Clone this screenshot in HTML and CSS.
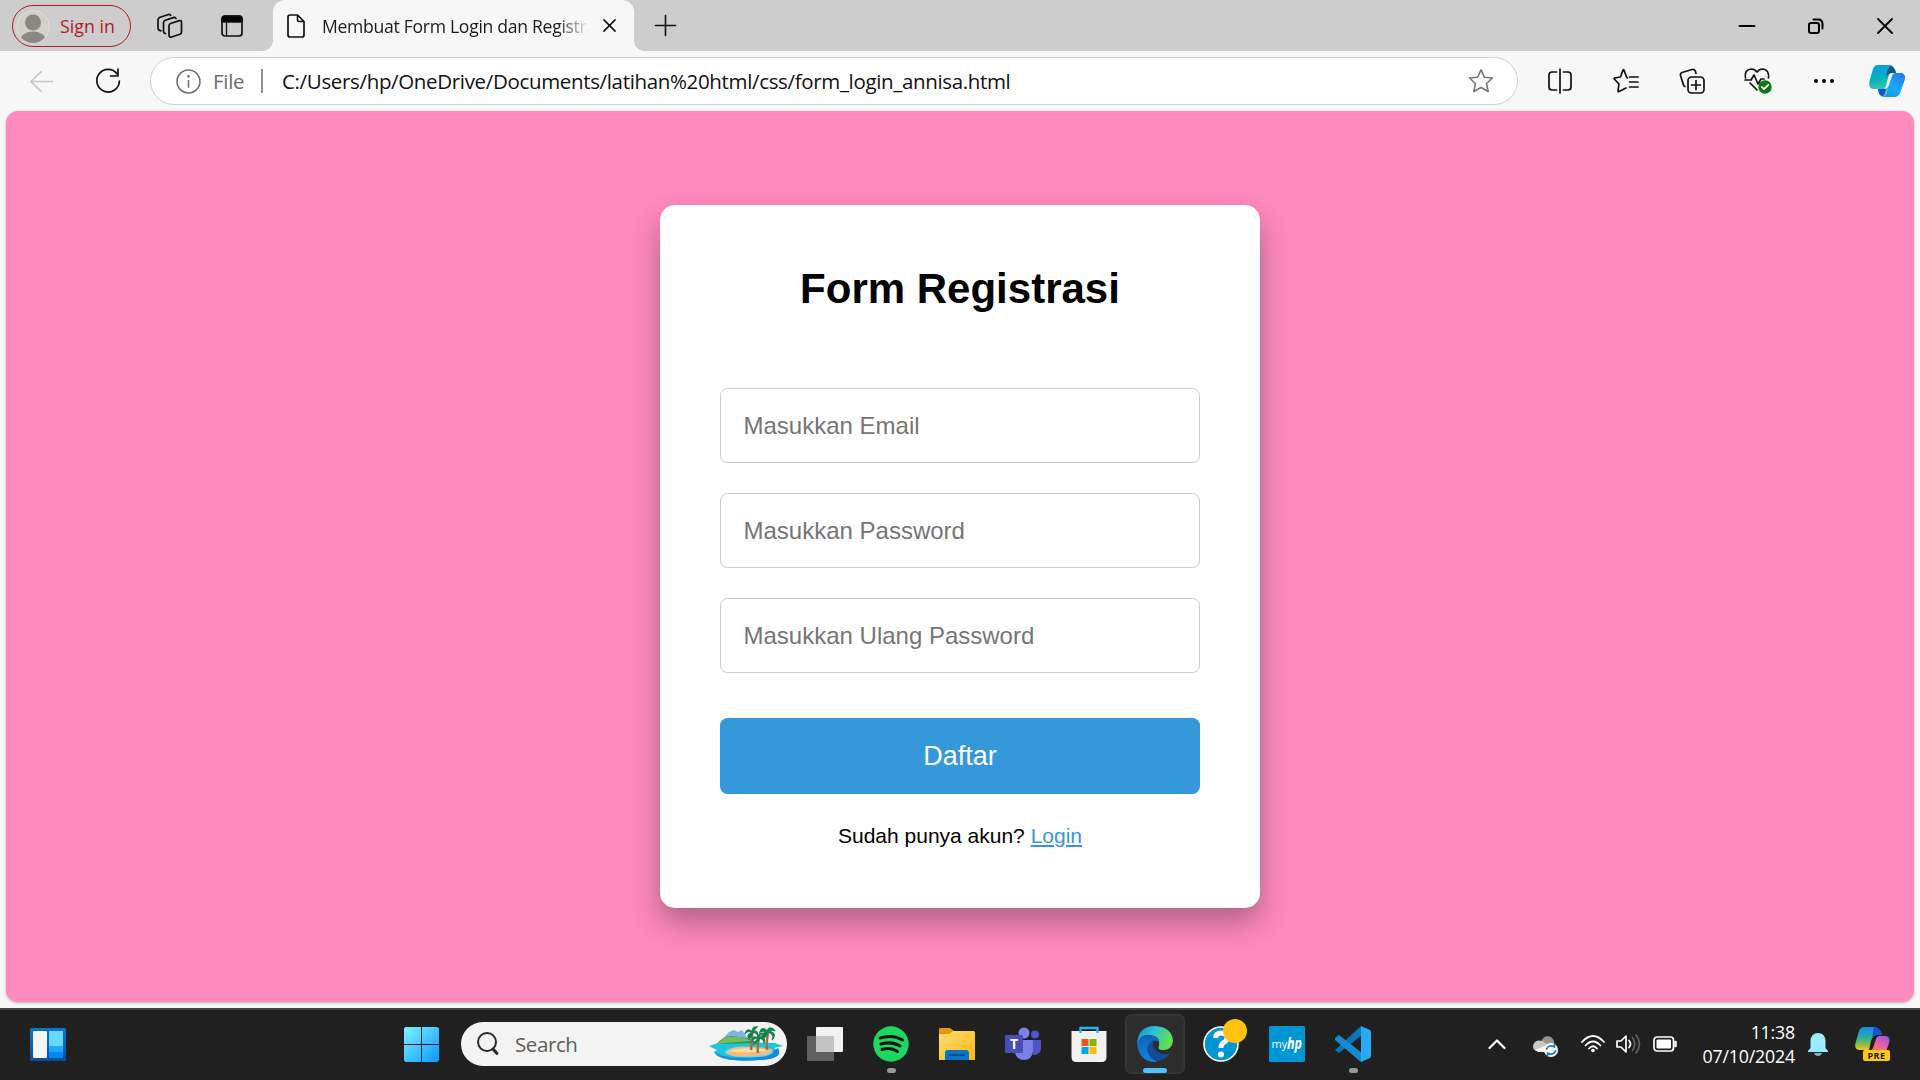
FILE: index.html
```html
<!DOCTYPE html>
<html lang="id">
<head>
<meta charset="utf-8">
<title>Membuat Form Login dan Registrasi</title>
<link rel="stylesheet" href="styles.css">
</head>
<body>
<div class="screen">
  <header class="tabbar">
    <div class="signin">
      <svg class="avatar" viewBox="0 0 34 34"><defs><clipPath id="av"><circle cx="17" cy="17" r="16"/></clipPath></defs><circle cx="17" cy="17" r="16.2" fill="#d3d0cc" stroke="#e3e0dc"/><circle cx="17" cy="12.5" r="8" fill="#8b8784"/><ellipse cx="17" cy="30" rx="12.5" ry="8.5" fill="#8b8784" clip-path="url(#av)"/></svg>
      <span class="signin-text">Sign in</span>
    </div>
    <svg class="workspaces ink" viewBox="0 0 26 26"><path d="M13.500 10.500L22.500 7.600Q24.500 7.200 24.500 9V19Q24.500 20.700 23 21.200L14.500 24Q12 24.500 12 22V13Q12 11 13.500 10.500Z"/><path d="M8.500 20.500H8Q6.500 20 6.500 18.500V10Q6.500 8 8.300 7.300L17 4.400Q18.500 4 19 5.500M4 17.800Q1 17.500 1 15V7Q1 5 3 4.300L11.500 1.500Q13 1 13.700 2.300"/></svg>
    <svg class="tabactions ink" viewBox="0 0 22 22"><rect x="1" y="1" width="20" height="20" rx="3"/><path d="M1 7V4Q1 1 4 1H18Q21 1 21 4V7Z" fill="#000"/><path d="M5.500 7V21" stroke-width="1.300"/></svg>
    <div class="tab">
      <svg class="file ink" viewBox="0 0 18 24"><path d="M3 1H10.500L17 7.500V21Q17 23 15 23H3Q1 23 1 21V3Q1 1 3 1ZM10.500 1V6Q10.500 7.500 12 7.500H17"/></svg>
      <span class="tab-title">Membuat Form Login dan Registrasi</span>
      <svg class="tab-close ink" viewBox="0 0 14 14"><path d="M1 1L13 13M13 1L1 13"/></svg>
    </div>
    <svg class="newtab ink" viewBox="0 0 22 22"><path d="M11 .5V21.500M.5 11H21.500"/></svg>
    <div class="window-buttons">
      <svg class="wb ink" viewBox="0 0 16 16"><path d="M.5 8H15.500" stroke-width="2"/></svg>
      <svg class="wb ink" viewBox="0 0 16 16"><rect x="1" y="5" width="10" height="10" rx="2" stroke-width="2"/><path d="M5.500 1.500H10Q14.500 1.500 14.500 6V10.500" stroke-width="2"/></svg>
      <svg class="wb ink" viewBox="0 0 16 16"><path d="M1 1L15 15M15 1L1 15" stroke-width="1.900"/></svg>
    </div>
  </header>

  <nav class="toolbar">
    <svg class="nav back" viewBox="0 0 26 24"><path d="M25 12H2M13 1.500L2 12L13 22.500"/></svg>
    <svg class="nav refresh ink" viewBox="0 0 26 26"><path d="M22.200 6A11.300 11.300 0 1 0 24.400 13M23 1V8H15.500"/></svg>
    <div class="address">
      <svg class="info" viewBox="0 0 24 24"><circle cx="12" cy="12" r="11"/><path d="M12 10.500V18"/><circle cx="12" cy="7" r=".6"/></svg>
      <span class="scheme">File</span>
      <span class="divider"></span>
      <span class="url">C:/Users/hp/OneDrive/Documents/latihan%20html/css/form_login_annisa.html</span>
      <svg class="star" viewBox="0 0 26 26"><path d="M13 1.800L16.300 9.200L24.500 10L18.500 15.500L20.200 23.500L13 19.500L5.800 23.500L7.500 15.500L1.500 10L9.700 9.200Z"/></svg>
    </div>
    <div class="tools">
      <div class="tool"><svg class="ink i26" viewBox="0 0 26 26"><path d="M9.500 4H5Q2 4 2 7V19Q2 22 5 22H9.500M16.500 4H21Q24 4 24 7V19Q24 22 21 22H16.500M13 1V25"/></svg></div>
      <div class="tool"><svg class="ink i26" viewBox="0 0 26 26"><path d="M14.500 10L13.500 9L11 2Q10.500 1.500 10 2L7.500 9L1.500 10Q.8 10.500 1.300 11L6 16L5 23Q5.200 24 6 23.500L13 20M16.500 9H25M16.500 14H25M16.500 19H25"/></svg></div>
      <div class="tool"><svg class="ink i26" viewBox="0 0 26 26"><rect x="9" y="9" width="16" height="16" rx="3.500"/><path d="M17 12.500V21.500M12.500 17H21.500M6 18.500Q4.800 18 4.500 17L1.500 7.500Q1 5.500 3 4.500L13 1.500Q15.500 1 16.300 3L17 5.500"/></svg></div>
      <div class="tool"><svg class="ink i28" viewBox="0 0 28 28"><path d="M1.500 11Q0 3 7 2Q11 2 13 5Q15 2 19 2Q25.500 3 24.500 11M1 13H7L10 8L14 17L17 12H20M6 16L13 23"/><circle cx="21" cy="20" r="6.700" fill="#107610" stroke="none"/><path d="M17.800 20L20 22.200L24.300 17.800" stroke="#fff"/></svg></div>
      <div class="tool"><svg class="i22" viewBox="0 0 22 22"><circle cx="3" cy="11" r="2"/><circle cx="11" cy="11" r="2"/><circle cx="19" cy="11" r="2"/></svg></div>
      <div class="tool tool-last"><svg class="i36" viewBox="0 0 36 34"><defs><linearGradient id="c1" x2=".2" y2="1"><stop stop-color="#0799e4"/><stop offset=".5" stop-color="#0ab2bd"/><stop offset="1" stop-color="#58dc88"/></linearGradient><linearGradient id="c2" x1="1" x2=".4" y2="1"><stop stop-color="#2870df"/><stop offset=".6" stop-color="#19a8ff"/><stop offset="1" stop-color="#159bee"/></linearGradient></defs><path d="M20 1Q25 1 27 9H33Q37 11 35.500 16L31 29Q29 33 25 33H14Q10 33 9 25H4Q-1 24 .5 17L4 5Q5.500 1 9 1Z" fill="url(#c1)"/><path d="M19 1Q25 1 27 9H22Q19 9 17.500 13Q18 4 22 1.500Z" fill="#075784"/><path d="M27 9H33Q37 11 35.500 16L31 29Q29 33 25 33H14Q17 32 18.500 27L23 12Q24 9 27 9Z" fill="url(#c2)"/><path d="M9 25H14Q17 25 18 22L16 29Q15 33 13 32Q10 31 9 25Z" fill="#1c4ce0"/><path d="M22 9H26Q24 9 23 12L19.500 22Q18.500 25 15 25Q16.500 24 17 22L19.500 12Q20 10 22 9Z" fill="#f7f7f7"/></svg></div>
    </div>
  </nav>

  <main class="viewport">
    <form class="card">
      <h2 class="card-title">Form Registrasi</h2>
      <input class="field" type="email" placeholder="Masukkan Email">
      <input class="field" type="password" placeholder="Masukkan Password">
      <input class="field" type="password" placeholder="Masukkan Ulang Password">
      <button class="submit" type="button">Daftar</button>
      <p class="switch">Sudah punya akun? <a class="link" href="#">Login</a></p>
    </form>
  </main>

  <footer class="taskbar">
    <svg class="widgets" viewBox="0 0 36 33"><defs><linearGradient id="w" x2="0" y2="1"><stop stop-color="#0878d4"/><stop offset="1" stop-color="#0c4c94"/></linearGradient></defs><rect width="36" height="33" rx="1.500" fill="url(#w)"/><rect x="3" y="3" width="14" height="27" rx="1" fill="#f5f5f7"/><path d="M19 3H33V18H19Z" fill="#67d9ff"/><path d="M19 18H33V24H19Z" fill="#1da5ff"/><path d="M19 24H33V30H19Z" fill="#0487f2"/></svg>
    <svg class="start" viewBox="0 0 35 35"><defs><linearGradient id="s" gradientUnits="userSpaceOnUse" x2="35" y2="35"><stop stop-color="#7df3ff"/><stop offset="1" stop-color="#0a96ff"/></linearGradient></defs><path d="M1.500 0H17V17H0V1.500ZM18 0H33.500L35 1.500V17H18ZM0 18H17V35H1.500L0 33.500ZM18 18H35V33.500L33.500 35H18Z" fill="url(#s)"/></svg>
    <div class="search">
      <svg class="lens" viewBox="0 0 24 24"><circle cx="11" cy="10" r="9"/><path d="M17 17L21 21.500" stroke-width="3"/></svg>
      <span class="search-text">Search</span>
      <svg class="island" viewBox="0 0 74 36"><path d="M0 20L12 16L66 17L74 20L65 22L70 25Q73 32 52 34Q20 36 8 30L5 26L8 24Z" fill="#1fc3dd"/><path d="M5 26Q18 34 40 31Q62 29 69 22Q75 33 50 34Q13 37 5 26Z" fill="#168ce0"/><ellipse cx="40" cy="26" rx="24" ry="5.500" fill="#67dcec"/><path d="M17 27Q24 19 39 21L63 23Q65 29 43 30Q22 31 17 27Z" fill="#f3bd7d"/><path d="M20 25Q33 20 60 24Q40 28 20 25Z" fill="#ffdb9f"/><path d="M15 12L20 6L25 4L29 6L33 4L39 13Z" fill="#7db5e2"/><path d="M8 18Q16 7 29 11Q43 12 48 17Z" fill="#2e9450"/><path d="M15 12Q28 8 43 15Q28 16 8 18Z" fill="#71bd61"/><path d="M43 7Q43 17 42 24M50 12Q48 20 49 27M59 7Q57 17 58 24" stroke="#a66c3a" stroke-width="2.500" fill="none"/><path d="M43 6Q38 1 36 8Q38 4 43 6Q37 10 40 13Q44 9 44 6Q51 8 48 13Q51 5 44 5L48 1Q43 1 43 6ZM49 12Q43 9 43 15Q46 11 49 12L45 18Q50 16 50 12Q55 12 55 17Q57 10 50 11Q52 6 56 8Q50 5 49 12ZM58 5Q53 0 51 6Q54 4 58 6Q52 7 53 13Q58 10 59 6Q66 8 63 14Q69 7 59 5Q64 3 66 5Q61 -1 58 5Z" fill="#087c4c" stroke="#15864f" stroke-width="1.300"/></svg>
    </div>
    <div class="apps">
      <div class="app"><svg class="i36" viewBox="0 0 36 36"><rect x="9" y="1" width="27" height="25" rx="1" fill="#f1f1f1"/><rect y="10" width="27" height="25" rx="1" fill="#606060"/><path d="M9 10H27V26H9Z" fill="#c4c4c4"/></svg><i class="dot none"></i></div>
      <div class="app"><svg class="i36" viewBox="0 0 36 36"><circle cx="18" cy="18" r="17.700" fill="#1ed760"/><path d="M7 12Q20 8 29.500 14M8 18Q19 15 27 20M9 23.500Q18 21 24.500 25.500" fill="none" stroke="#101510" stroke-width="3" stroke-linecap="round"/></svg><i class="dot"></i></div>
      <div class="app"><svg class="i36" viewBox="0 0 36 36"><defs><linearGradient id="f" x2="1" y2="1"><stop stop-color="#ffdc74"/><stop offset="1" stop-color="#ffb80f"/></linearGradient></defs><path d="M0 3Q0 2 1 2H11L15 5V10H0Z" fill="#e19a04"/><path d="M0 8H10L14 5H35L36 6V34H0Z" fill="url(#f)"/><path d="M6 34V27Q6 24 9 24H27Q30 24 30 27V34Z" fill="#0875c9"/><path d="M10 29H26" stroke="#064f91" stroke-width="2"/></svg><i class="dot none"></i></div>
      <div class="app"><svg class="i36" viewBox="0 0 36 36"><circle cx="19" cy="7" r="5.500" fill="#7c83ec"/><circle cx="30" cy="8.500" r="4" fill="#4d55c7"/><path d="M26 14H36V23Q35 29 28 29Z" fill="#4d55c7"/><path d="M10 14H28V25Q27 34 19 34Q12 34 10 27Z" fill="#7a80e5"/><rect y="9" width="18" height="18" rx="1" fill="#474eb9"/><text x="9" y="23" class="teams-letter">T</text></svg><i class="dot none"></i></div>
      <div class="app"><svg class="i36" viewBox="0 0 36 36"><path d="M.5 5H35.500V31Q35.500 36 31 36H5Q.5 36 .5 31Z" fill="#f1f1f1"/><path d="M9.500 7V2H26.500V7" fill="none" stroke="#29b5eb" stroke-width="2.300"/><path d="M10.500 13H17.500V20H10.500Z" fill="#f25022"/><path d="M18.500 13H25.500V20H18.500Z" fill="#7fba00"/><path d="M10.500 21H17.500V28H10.500Z" fill="#00a4ef"/><path d="M18.500 21H25.500V28H18.500Z" fill="#ffb900"/></svg><i class="dot none"></i></div>
      <div class="app active"><svg class="i36" viewBox="0 0 36 36"><defs><linearGradient id="e1" x2="1" y2=".3"><stop stop-color="#168bd4"/><stop offset=".5" stop-color="#2bc3d2"/><stop offset="1" stop-color="#63df4f"/></linearGradient><linearGradient id="e2" x2="0" y2="1"><stop stop-color="#0b63b5"/><stop offset="1" stop-color="#1485dc"/></linearGradient></defs><path d="M0 18Q1 0 18 0Q35 1 36 15Q35 24 26 24Q20 24 22 20Q24 11 14 9Q5 8 0 18Z" fill="url(#e1)"/><path d="M0 17Q4 7 14 9Q22 11 22 16Q15 12 12 20Q11 29 20 36Q2 37 0 17Z" fill="url(#e2)"/><path d="M17 14Q7 19 12 29Q15 35 22 35Q30 33 33.500 27Q27 30 21 26Q14 22 17 14Z" fill="#104c98"/></svg><i class="dot"></i></div>
      <div class="app help"><svg class="i36" viewBox="0 0 36 36"><circle cx="18" cy="18" r="17" fill="#0096d6" stroke="#fff" stroke-width="1.600"/><path d="M12.500 12Q13 7 18 7Q24 7 24 12Q24 15 20 17Q18 18.500 18 22" fill="none" stroke="#fff" stroke-width="5"/><circle cx="18" cy="28.500" r="3" fill="#fff"/></svg><b class="alert"></b><i class="dot none"></i></div>
      <div class="app"><svg class="i36" viewBox="0 0 36 36"><rect width="36" height="36" rx="1.500" fill="#0096d6"/><text x="2.500" y="22" class="my">my</text><text x="18" y="23" class="hp" textLength="15" lengthAdjust="spacingAndGlyphs">hp</text></svg><i class="dot none"></i></div>
      <div class="app"><svg class="i36" viewBox="0 0 36 36"><path d="M0 24L26 0V10L4 27Z" fill="#0875b8"/><path d="M0 12L4 9L27 27L26 36L0 14Z" fill="#168bd2"/><path d="M26 0L35 4Q36 5 36 6V30Q36 31 35 32L26 36Z" fill="#28a8f5"/></svg><i class="dot"></i></div>
    </div>
    <div class="tray">
      <svg class="chev" viewBox="0 0 18 12"><path d="M1.500 10L9 2.500L16.500 10"/></svg>
      <svg class="cloud" viewBox="0 0 26 22"><path d="M2 15Q-2 9 4 6Q6 6 8 7Q11-1 18 2Q22 5 21 10Z" fill="#969696"/><path d="M0 11Q2 4 9 6L19 12L12 16H5Q0 16 0 11Z" fill="#c7c7c7"/><path d="M2 15L14 10L20 13V17H5Z" fill="#f3f3f3"/><circle cx="18" cy="15" r="7" fill="#fff"/><path d="M13.500 14Q16 9 21.500 12V9M22.500 16Q20 21 14.500 18V21" fill="none" stroke="#1679c9" stroke-width="1.700"/></svg>
      <svg class="wifi" viewBox="0 0 24 18"><path d="M1 7Q12-5 23 7M4.500 10.500Q12 2.500 19.500 10.500M8 13.500Q12 9 16 13.500"/><circle cx="12" cy="15.500" r="1.800" fill="#fff" stroke="none"/></svg>
      <svg class="sound" viewBox="0 0 25 20"><path d="M1 7V13H5L10 18V2L5 7ZM13 6.500Q16 10 13 13.500"/><path d="M16.500 3.500Q21 10 16.500 16.500M20 1Q27 10 20 19" class="dim"/></svg>
      <svg class="battery" viewBox="0 0 24 16"><rect x="1" y="1" width="19.500" height="14" rx="3"/><rect x="3.500" y="3.500" width="14.500" height="9" rx="1" fill="#fff" stroke="none"/><path d="M22.500 6V10" stroke-width="2.500"/></svg>
      <div class="clock"><span class="time">11:38</span><span class="date">07/10/2024</span></div>
      <svg class="bell" viewBox="0 0 20 23"><path d="M2.500 15V8Q3 0 10 0Q17 0 17.500 8V15L20 18V19H0V18Z" fill="#99ebff"/><path d="M6 20H14Q13 23 10 23Q7 23 6 20Z" fill="#67bfd2"/></svg>
      <svg class="copilot" viewBox="0 0 36 36"><defs><linearGradient id="p1" x2="0" y2="1"><stop stop-color="#168bed"/><stop offset=".45" stop-color="#28aba9"/><stop offset=".75" stop-color="#8bbc48"/><stop offset="1" stop-color="#f5c520"/></linearGradient><linearGradient id="p2" x1="1" x2=".3" y2="1"><stop stop-color="#9b4df4"/><stop offset=".6" stop-color="#ee629a"/><stop offset="1" stop-color="#ff7c50"/></linearGradient></defs><path d="M9 1H19Q25 1 27 9H21Q18 9 16 15L14 24H4Q-1 23 .5 17L4 5Q5.500 1 9 1Z" fill="url(#p1)"/><path d="M19 1Q25 1 27 9H21Q18 9 17 13Q18 5 19 1Z" fill="#1852cc"/><path d="M24 10H31Q36 11 34 17L31 26H12Q17 25 18 22L21 13Q22 10 24 10Z" fill="url(#p2)"/><rect x="8" y="24" width="27" height="11" rx="2" fill="#ffc90c"/><text x="21.500" y="32.800" class="pre">PRE</text></svg>
    </div>
  </footer>
</div>
</body>
</html>
```
FILE: styles.css
```css
* { box-sizing: border-box; }
body {
  margin: 0;
  width: 1920px;
  height: 1080px;
  overflow: hidden;
  font-family: "Open Sans", "Noto Sans", sans-serif;
}
svg { display: block; flex: none; overflow: visible; }
.screen { display: flex; flex-direction: column; height: 1080px; background: #f7f7f7; }
.ink { fill: none; stroke: #111; stroke-width: 1.7; stroke-linecap: round; stroke-linejoin: round; }
.i22 { width: 22px; height: 22px; }
.i26 { width: 26px; height: 26px; }
.i28 { width: 28px; height: 28px; }
.i36 { width: 36px; height: 36px; }

/* Tab strip */
.tabbar { display: flex; align-items: center; height: 51px; flex: none; background: #cdcdcd; }
.signin {
  display: flex; align-items: center; gap: 10px;
  width: 119px; height: 42px; margin-left: 12px; padding-left: 3px;
  border: 1.5px solid #b3191f; border-radius: 21px;
}
.avatar { width: 34px; height: 34px; margin-top: 2px; }
.signin-text { color: #ad1d24; font-size: 17.8px; line-height: 24px; white-space: nowrap; }
.workspaces { width: 26px; height: 26px; margin-left: 26px; }
.tabactions { width: 22px; height: 22px; margin-left: 38px; }
.tab {
  position: relative; display: flex; align-items: center;
  width: 361px; height: 51px; margin-left: 30px; padding-left: 14px;
  background: #f7f7f7; border-radius: 12px 12px 0 0;
}
.tab::before, .tab::after { content: ""; position: absolute; bottom: 0; width: 10px; height: 10px; }
.tab::before { left: -10px; background: radial-gradient(circle at 0 0, #cdcdcd 9.5px, #f7f7f7 10px); }
.tab::after { right: -10px; background: radial-gradient(circle at 100% 0, #cdcdcd 9.5px, #f7f7f7 10px); }
.file { width: 18px; height: 24px; }
.tab-title {
  width: 267px; margin-left: 17px; overflow: hidden; white-space: nowrap;
  font-size: 17.6px; line-height: 24px; letter-spacing: -.3px; color: #1b1b1b;
  -webkit-mask-image: linear-gradient(90deg, #000 88%, transparent 100%);
  mask-image: linear-gradient(90deg, #000 88%, transparent 100%);
}
.tab-close { width: 13px; height: 13px; margin-left: 14px; }
.newtab { width: 21px; height: 21px; margin-left: 21px; }
.window-buttons { display: flex; gap: 53px; margin-left: auto; margin-right: 27px; }
.wb { width: 16px; height: 16px; stroke: #000; }

/* Navigation bar */
.toolbar { display: flex; align-items: center; height: 60px; flex: none; }
.nav { fill: none; stroke-width: 1.7; }
.back { width: 25px; height: 23px; margin-left: 29px; stroke: #c5c5c5; }
.refresh { width: 26px; height: 26px; margin-left: 41px; }
.address {
  display: flex; align-items: center; flex: none;
  width: 1368px; height: 48px; margin-left: 29px; padding-left: 25px;
  background: #fff; border: 1.5px solid #d1d1d1; border-radius: 24px;
}
.info { width: 25px; height: 25px; fill: none; stroke: #707070; stroke-width: 1.5; }
.scheme { width: 36px; margin-left: 12px; font-size: 20.5px; letter-spacing: -.3px; line-height: 28px; color: #6c6c6c; }
.divider { width: 2px; height: 24px; margin-left: 12px; background: #929292; }
.url { margin-left: 19px; font-size: 20.5px; line-height: 28px; letter-spacing: -.34px; white-space: nowrap; color: #111; }
.star { width: 26px; height: 26px; margin-left: auto; margin-right: 23px; fill: none; stroke: #777; stroke-width: 1.6; stroke-linejoin: round; }
.tools { display: flex; margin-left: 9px; }
.tool { display: flex; align-items: center; justify-content: center; flex: none; width: 66px; height: 48px; }
.tool-last { width: 60px; }

/* Page and registration card */
.viewport {
  display: flex; justify-content: center; align-items: flex-start;
  height: 891px; flex: none; margin: 0 6px; padding-top: 94px;
  background: #ff8abc; border-radius: 12px; box-shadow: 0 1px 3px #0004;
}
.card {
  display: flex; flex-direction: column; width: 600px; height: 703px; padding: 60px;
  background: #fff; border-radius: 15px; box-shadow: 0 15px 30px rgba(0, 0, 0, .3);
  font-family: "Liberation Sans", Arial, sans-serif;
}
.card-title { margin: 0 0 75px; font-size: 42px; line-height: 48px; text-align: center; color: #000; }
.field {
  width: 480px; height: 75px; flex: none; margin: 0 0 30px; padding: 0 22.5px;
  border: 1.5px solid #ccc; border-radius: 7.5px; background: #fff; outline: none;
  font: 24px "Liberation Sans", Arial, sans-serif;
}
.field::placeholder { color: #757575; opacity: 1; }
.submit {
  height: 76px; flex: none; margin: 15px 0 0; padding: 0; border: 0; border-radius: 7.5px;
  background: #3498db; color: #fff; font: 27px "Liberation Sans", Arial, sans-serif;
}
.switch { margin: 30px 0 0; font-size: 21px; line-height: 24px; text-align: center; color: #000; }
.link { color: #3498db; }

/* Taskbar */
.taskbar {
  display: flex; align-items: center; height: 72px; flex: none; margin-top: 6px;
  background: #202020; border-top: 2px solid #444;
}
.widgets { width: 36px; height: 33px; margin-left: 30px; margin-bottom: 2px; }
.start { width: 35px; height: 35px; margin-left: 338px; margin-bottom: 1px; }
.search { display: flex; align-items: center; width: 326px; height: 44px; margin-left: 22px; margin-bottom: 2px; padding: 0 4px 0 15px; background: #f3f3f3; border-radius: 22px; }
.lens { width: 24px; height: 24px; fill: none; stroke: #282828; stroke-width: 2; stroke-linecap: round; }
.search-text { margin-left: 15px; font-size: 20.5px; letter-spacing: -.4px; color: #5c5c5c; }
.island { width: 74px; height: 36px; margin-left: auto; }
.apps { display: flex; margin-left: 8px; margin-bottom: 2px; gap: 6px; }
.app {
  position: relative; display: flex; flex-direction: column; align-items: center;
  width: 60px; height: 60px; padding-top: 12px; border-radius: 7px;
}
.active { background: #2d2d2d; box-shadow: inset 0 0 0 1.5px #383838; }
.dot { width: 9px; height: 5px; margin-top: 6px; border-radius: 3px; background: #999; }
.active .dot { width: 24px; background: #4cc2ff; }
.none { visibility: hidden; }
.alert { position: absolute; left: 32px; top: 5px; width: 24px; height: 24px; border-radius: 50%; background: #ffc20e; }
.teams-letter { font: bold 14px "Open Sans", sans-serif; fill: #fff; text-anchor: middle; }
.my { font: 11px "Open Sans", sans-serif; fill: #fff; }
.hp { font: italic bold 16px "Open Sans", sans-serif; fill: #fff; }
.pre { font: bold 9px "Open Sans", sans-serif; letter-spacing: .5px; text-anchor: middle; fill: #171717; }
.tray { display: flex; align-items: center; margin-left: auto; margin-right: 29px; margin-bottom: 2px; }
.tray svg { fill: none; stroke-linecap: round; stroke-linejoin: round; }
.chev { width: 18px; height: 12px; stroke: #fff; stroke-width: 2.2; }
.cloud { width: 26px; height: 22px; margin-left: 27px; margin-top: 3px; }
.wifi { width: 24px; height: 18px; margin-left: 22px; stroke: #fff; stroke-width: 1.8; }
.sound { width: 25px; height: 20px; margin-left: 11px; stroke: #fff; stroke-width: 1.7; }
.dim { stroke: #626262; }
.battery { width: 24px; height: 16px; margin-left: 12px; stroke: #fff; stroke-width: 1.7; }
.clock { display: flex; flex-direction: column; align-items: flex-end; width: 94px; margin-left: 24px; font-size: 17.8px; line-height: 24px; color: #fff; white-space: nowrap; }
.time, .date { letter-spacing: -.2px; }
.bell { width: 20px; height: 23px; margin-left: 13px; }
.copilot { width: 36px; height: 36px; margin-left: 27px; }
```
